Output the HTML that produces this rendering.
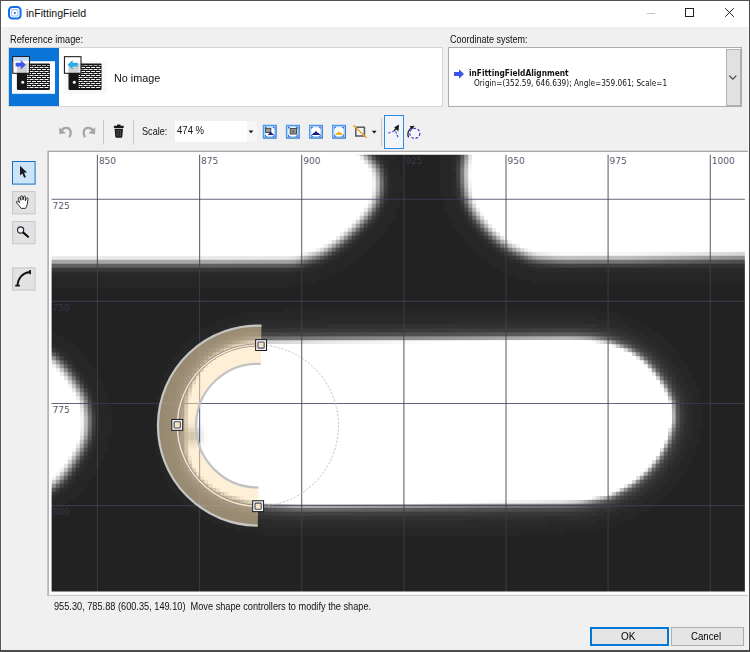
<!DOCTYPE html>
<html><head><meta charset="utf-8"><title>inFittingField</title>
<style>
html,body{margin:0;padding:0}
body{width:750px;height:652px;overflow:hidden;background:#f0f0f0;position:relative;font-family:"Liberation Sans",sans-serif;font-size:10px;color:#000}
.a{position:absolute}
.t{position:absolute;white-space:pre;transform-origin:0 0;line-height:12px}
.dv{font-family:"DejaVu Sans","Liberation Sans",sans-serif}
</style></head><body>
<!-- title bar -->
<div class="a" style="left:0;top:0;width:750px;height:27px;background:#fff"></div>
<svg class="a" style="left:7px;top:5px" width="16" height="16" viewBox="0 0 16 16">
<rect x="2" y="2" width="11.6" height="11.6" rx="3.4" fill="#fff" stroke="#0f6fe6" stroke-width="2"/>
<rect x="4.6" y="4.6" width="6.4" height="6.4" rx="1.2" fill="none" stroke="#9cc4f7" stroke-width="1.1"/>
<circle cx="7.8" cy="8" r="1" fill="#2a56b0"/>
</svg>
<div class="t" style="left:26px;top:7px;font-size:10.6px;color:#111">inFittingField</div>
<svg class="a" style="left:640px;top:0" width="110" height="27" viewBox="0 0 110 27">
<path d="M6.800 13.500h8.400" stroke="#c2c2c2" stroke-width="1" fill="none"/>
<rect x="45.5" y="8.5" width="8" height="8" fill="none" stroke="#222" stroke-width="1"/>
<path d="M85.2 8.2l8.6 8.6M93.8 8.2l-8.6 8.6" stroke="#222" stroke-width="1" fill="none"/>
</svg>

<!-- reference image -->
<div class="t" style="left:10.4px;top:34px;transform:scaleX(.925);color:#111">Reference image:</div>
<div class="a" style="left:8px;top:47px;width:435px;height:60px;background:#fff;border:1px solid #d4d4d4;box-sizing:border-box"></div>
<div class="a" style="left:9px;top:48px;width:50px;height:58px;background:#0a74d9"></div>
<div id="ri"><svg class="a" style="left:8px;top:48px" width="110" height="58" viewBox="8 48 110 58"><rect x="12" y="61.2" width="43" height="32.6" fill="#fdfdfd"/><rect x="63.6" y="61.2" width="43" height="32.6" fill="#f8f8f8"/><rect x="16.9" y="63.6" width="33" height="26.3" rx=".8" fill="#161616"/><path d="M27.0 65.5h4.0M32.0 65.5h4.0M37.0 65.5h4.0M42.0 65.5h4.0M47.0 65.5h2.6" stroke="#a8a8a8" stroke-width="1"/><path d="M29.5 67.5h4.0M34.5 67.5h4.0M39.5 67.5h4.0M44.5 67.5h4.0M27.0 67.5h1.5" stroke="#f2f2f2" stroke-width="1"/><path d="M27.0 69.5h4.0M32.0 69.5h4.0M37.0 69.5h4.0M42.0 69.5h4.0M47.0 69.5h2.6" stroke="#f2f2f2" stroke-width="1"/><path d="M29.5 71.5h4.0M34.5 71.5h4.0M39.5 71.5h4.0M44.5 71.5h4.0M27.0 71.5h1.5" stroke="#f2f2f2" stroke-width="1"/><path d="M27.0 73.5h4.0M32.0 73.5h4.0M37.0 73.5h4.0M42.0 73.5h4.0M47.0 73.5h2.6" stroke="#f2f2f2" stroke-width="1"/><path d="M29.5 75.5h4.0M34.5 75.5h4.0M39.5 75.5h4.0M44.5 75.5h4.0M27.0 75.5h1.5" stroke="#f2f2f2" stroke-width="1"/><path d="M27.0 77.5h4.0M32.0 77.5h4.0M37.0 77.5h4.0M42.0 77.5h4.0M47.0 77.5h2.6" stroke="#f2f2f2" stroke-width="1"/><path d="M29.5 79.5h4.0M34.5 79.5h4.0M39.5 79.5h4.0M44.5 79.5h4.0M27.0 79.5h1.5" stroke="#f2f2f2" stroke-width="1"/><path d="M27.0 81.5h4.0M32.0 81.5h4.0M37.0 81.5h4.0M42.0 81.5h4.0M47.0 81.5h2.6" stroke="#f2f2f2" stroke-width="1"/><path d="M29.5 83.5h4.0M34.5 83.5h4.0M39.5 83.5h4.0M44.5 83.5h4.0M27.0 83.5h1.5" stroke="#f2f2f2" stroke-width="1"/><path d="M27.0 85.5h4.0M32.0 85.5h4.0M37.0 85.5h4.0M42.0 85.5h4.0M47.0 85.5h2.6" stroke="#f2f2f2" stroke-width="1"/><path d="M29.5 87.5h4.0M34.5 87.5h4.0M39.5 87.5h4.0M44.5 87.5h4.0M27.0 87.5h1.5" stroke="#f2f2f2" stroke-width="1"/><circle cx="22.7" cy="82.3" r="1.5" fill="#f8f8f8"/><rect x="12.8" y="56.7" width="16.6" height="16.6" fill="rgba(255,255,255,.8)" stroke="#0a0a0a" stroke-width="1"/><rect x="13.3" y="57.2" width="15.6" height="3.2" fill="#c2daf2"/><path d="M15.6 62.8h5.2v-2.9l5 4.8-5 4.8v-2.9h-5.2z" fill="#3a58ea"/><rect x="68.5" y="63.6" width="33" height="26.3" rx=".8" fill="#161616"/><path d="M78.6 65.5h4.0M83.6 65.5h4.0M88.6 65.5h4.0M93.6 65.5h4.0M98.6 65.5h2.6" stroke="#a8a8a8" stroke-width="1"/><path d="M81.1 67.5h4.0M86.1 67.5h4.0M91.1 67.5h4.0M96.1 67.5h4.0M78.6 67.5h1.5" stroke="#f2f2f2" stroke-width="1"/><path d="M78.6 69.5h4.0M83.6 69.5h4.0M88.6 69.5h4.0M93.6 69.5h4.0M98.6 69.5h2.6" stroke="#f2f2f2" stroke-width="1"/><path d="M81.1 71.5h4.0M86.1 71.5h4.0M91.1 71.5h4.0M96.1 71.5h4.0M78.6 71.5h1.5" stroke="#f2f2f2" stroke-width="1"/><path d="M78.6 73.5h4.0M83.6 73.5h4.0M88.6 73.5h4.0M93.6 73.5h4.0M98.6 73.5h2.6" stroke="#f2f2f2" stroke-width="1"/><path d="M81.1 75.5h4.0M86.1 75.5h4.0M91.1 75.5h4.0M96.1 75.5h4.0M78.6 75.5h1.5" stroke="#f2f2f2" stroke-width="1"/><path d="M78.6 77.5h4.0M83.6 77.5h4.0M88.6 77.5h4.0M93.6 77.5h4.0M98.6 77.5h2.6" stroke="#f2f2f2" stroke-width="1"/><path d="M81.1 79.5h4.0M86.1 79.5h4.0M91.1 79.5h4.0M96.1 79.5h4.0M78.6 79.5h1.5" stroke="#f2f2f2" stroke-width="1"/><path d="M78.6 81.5h4.0M83.6 81.5h4.0M88.6 81.5h4.0M93.6 81.5h4.0M98.6 81.5h2.6" stroke="#f2f2f2" stroke-width="1"/><path d="M81.1 83.5h4.0M86.1 83.5h4.0M91.1 83.5h4.0M96.1 83.5h4.0M78.6 83.5h1.5" stroke="#f2f2f2" stroke-width="1"/><path d="M78.6 85.5h4.0M83.6 85.5h4.0M88.6 85.5h4.0M93.6 85.5h4.0M98.6 85.5h2.6" stroke="#f2f2f2" stroke-width="1"/><path d="M81.1 87.5h4.0M86.1 87.5h4.0M91.1 87.5h4.0M96.1 87.5h4.0M78.6 87.5h1.5" stroke="#f2f2f2" stroke-width="1"/><circle cx="74.3" cy="82.3" r="1.5" fill="#f8f8f8"/><rect x="64.4" y="56.7" width="16.6" height="16.6" fill="rgba(255,255,255,.8)" stroke="#0a0a0a" stroke-width="1"/><path d="M77.8 62.8h-5.2v-2.9l-5 4.8 5 4.8v-2.9h5.2z" fill="#2eaae8"/></svg></div><!--riend-->
<div class="t" style="left:113.500px;top:72px;font-size:10.600px;transform:scaleX(1.020);color:#111">No image</div>

<!-- coordinate system -->
<div class="t" style="left:449.6px;top:34px;transform:scaleX(.9);color:#111">Coordinate system:</div>
<div class="a" style="left:448px;top:47px;width:294px;height:60px;background:#fff;border:1px solid #acacac;box-sizing:border-box"></div>
<div class="a" style="left:726px;top:49px;width:14.500px;height:57px;background:#e1e1e1;border:1px solid #b2b2b2;box-sizing:border-box"></div>
<svg class="a" style="left:727px;top:72px" width="12" height="10" viewBox="0 0 12 10"><path d="M2.300 3.600l3.500 3.500 3.500-3.500" fill="none" stroke="#444" stroke-width="1.200"/></svg>
<svg class="a" style="left:453px;top:68px" width="12" height="12" viewBox="0 0 12 12"><path d="M1 4h5V1.2L11 6 6 10.8V8H1z" fill="#3a55e8"/></svg>
<div class="t dv" style="left:469px;top:67px;font-weight:bold;font-size:8.400px;transform:scaleX(.890);color:#111">inFittingFieldAlignment</div>
<div class="t dv" style="left:474px;top:77px;font-size:8.400px;transform:scaleX(.880);color:#111">Origin=(352.59, 646.639); Angle=359.061; Scale=1</div>

<!-- toolbar -->
<div id="tb">
<svg class="a" style="left:50px;top:112px" width="390" height="40" viewBox="50 112 390 40">
<!-- undo / redo (disabled) -->
<g id="un"><path d="M69.4 137.200c2.600-4.600 1.400-9.200-3-9.400-2.200-.1-3.800.8-4.800 2.600" fill="none" stroke="#a6a6a6" stroke-width="2.300"/>
<path d="M59.100 127.300l.3 6.900 6.500-.9z" fill="#a6a6a6"/></g>
<use href="#un" transform="matrix(-1 0 0 1 154.400 0)"/>
<!-- separators -->
<path d="M103.5 119.5v25M133.5 119.5v25M381.5 118.5v28" stroke="#c8c8c8" stroke-width="1"/>
<!-- trash -->
<g fill="#1a1a1a">
<rect x="117" y="124.6" width="3.6" height="1.6" rx=".6"/>
<rect x="113.8" y="125.8" width="10" height="2.3" rx=".8"/>
<path d="M114.6 128.8h8.4l-.7 8a1.1 1.1 0 0 1-1.1 1h-4.8a1.1 1.1 0 0 1-1.1-1z"/>
</g>
<path d="M117 130v6.4M118.8 130v6.4M120.6 130v6.4" stroke="#6a6a6a" stroke-width=".6"/>
<!-- combo -->
<rect x="175" y="121" width="82" height="21" fill="#fff"/>
<rect x="247" y="121" width="10" height="21" fill="#f6f6f6"/>
<path d="M248.6 130.6h4.8l-2.4 2.6z" fill="#111"/>
<!-- fit icons -->
<g id="fi1">
<rect x="263.500" y="125.500" width="12.400" height="12.400" fill="#fff" stroke="#4a9aec" stroke-width="1.500"/>
<rect x="264.700" y="126.700" width="10" height="10" fill="#fbfdff" stroke="#a9d3fb" stroke-width="1.100"/>
<path d="M263.400 138.200h12.800v-12.800" fill="none" stroke="#2c64a8" stroke-width=".9" opacity=".55"/>
<path d="M264.900 129v-2.300h2.300zM272.200 126.700h2.300v2.300zM274.500 134.400v2.300h-2.300zM267.200 136.700h-2.300v-2.300z" fill="#2f55e2"/>
</g>
<use href="#fi1" x="23.1"/><use href="#fi1" x="46.2"/><use href="#fi1" x="69.3"/>
<rect x="265.600" y="128.300" width="5.200" height="4.200" fill="#9a9a9a" stroke="#3a3a3a" stroke-width=".9"/>
<path d="M268 135h5.800l-1-1.500h-.8l-.6-1.200h-1.400l-.6 1.200h-.6z" fill="#141a8c"/>
<rect x="290.2" y="128.6" width="6.4" height="5.4" fill="#9a9a9a" stroke="#333" stroke-width=".9"/>
<rect x="292.2" y="130.4" width="2.2" height="1.8" fill="#555"/>
<path d="M311.8 135h8.4l-1.6-2h-1l-.8-1.6h-1.8l-.8 1.6h-.8z" fill="#141a8c"/>
<path d="M334.9 135h8.4l-1.6-2h-1l-.8-1.6h-1.8l-.8 1.6h-.8z" fill="#e8b820"/>
<!-- square with diagonal -->
<rect x="355.8" y="127.2" width="8.6" height="8.8" fill="#f4f4f4" stroke="#555a60" stroke-width="1.5"/>
<path d="M353.4 125.2l13.2 12.6" stroke="#f0a020" stroke-width="1.3"/>
<path d="M371.8 130.8h4.8l-2.4 2.6z" fill="#111"/>
<!-- selected tool -->
<rect x="384.500" y="115.500" width="19" height="33" fill="#f1f4f8" stroke="#2a8ae0" stroke-width="1"/>
<path d="M388.2 133.2l7-2.6" stroke="#5a4fe0" stroke-width="1.1" stroke-dasharray="2.6 1.4" fill="none"/>
<path d="M395.6 131.4l2.4 5.8" stroke="#4038d8" stroke-width="1.1" stroke-dasharray="2.4 1.4" fill="none"/>
<path d="M399 124.4l-.6 7.2-1.8-2-2.6 1.6-.4-1 2-2.2-1.6-.6z" fill="#141414"/>
<!-- rotate icon -->
<circle cx="414.8" cy="133.4" r="5" fill="#f8f8f8" stroke="#3a34d8" stroke-width="1.2" stroke-dasharray="2.6 1.7"/>
<path d="M408.6 137.4a7.4 7.4 0 0 1 3-9.6" fill="none" stroke="#222" stroke-width="1.3"/>
<path d="M409.6 126.2l5-.4-2.6 3.6z" fill="#141414"/>
</svg>
<div class="t" style="left:142px;top:125px;font-size:10.6px;transform:scaleX(.86);color:#111">Scale:</div>
<div class="t" style="left:177px;top:125px;font-size:10.400px;transform:scaleX(.920);color:#111">474 %</div>
</div><!--tbend-->

<!-- left tools -->
<div id="lt"><svg class="a" style="left:8px;top:156px" width="36" height="140" viewBox="8 156 36 140">
<rect x="12.5" y="161.5" width="22.6" height="22.6" fill="#cce4f7" stroke="#1a6fc4" stroke-width="1"/>
<rect x="12.6" y="191.6" width="22.4" height="22.2" fill="#e2e2e2" stroke="#c6c6c6" stroke-width="1"/>
<rect x="12.6" y="221.5" width="22.4" height="22.2" fill="#e2e2e2" stroke="#c6c6c6" stroke-width="1"/>
<rect x="12.6" y="267.9" width="22.4" height="22.2" fill="#e2e2e2" stroke="#c6c6c6" stroke-width="1"/>
<!-- cursor -->
<path d="M20 165.8v9.6l2.3-2 1.9 4.4 1.7-.8-1.9-4.2 3-.3z" fill="#1c1c1c"/>
<!-- hand -->
<path d="M21.2 208.4c-1.2-1.6-2.6-3.6-4.4-5.4-.9-1-.1-2.200 1.100-1.600l1.700 1.300-1.300-4.200c-.3-1.100 1.100-1.600 1.600-.6l1.100 2.400-.3-3.600c0-1.200 1.500-1.300 1.800-.2l.6 3.400.6-3.200c.3-1.100 1.700-.9 1.700.2l-.1 3.800 1.100-2.300c.5-1 1.800-.5 1.600.6-.4 2.200-.5 4-.9 5.800-.3 1.500-.9 2.500-1.600 3.600z" fill="#fff" stroke="#1a1a1a" stroke-width=".9" stroke-linejoin="round"/>
<!-- magnifier -->
<circle cx="20.6" cy="230" r="3.1" fill="#e9f1fb" stroke="#222" stroke-width="1.1"/>
<path d="M23.3 232.600l4.800 4.100" stroke="#111" stroke-width="2.100" stroke-linecap="round"/>
<!-- arc -->
<path d="M17.4 285.600c.8-7.400 5.200-12.600 12.600-13.600" fill="none" stroke="#111" stroke-width="1.800"/>
<path d="M15.300 285.700h4.500M30.100 269.900v4.400" stroke="#111" stroke-width="1.700"/>
</svg></div><!--ltend-->

<!-- canvas -->

<div id="cv"><svg class="a" style="left:0;top:0" width="750" height="652" viewBox="0 0 750 652">
<defs><clipPath id="ic"><rect x="51" y="154" width="695" height="439"/></clipPath><filter id="bl" filterUnits="userSpaceOnUse" x="-60" y="40" width="870" height="670"><feGaussianBlur in="SourceGraphic" stdDeviation="5" result="a"/><feGaussianBlur in="SourceGraphic" stdDeviation="18" result="c"/><feComposite in="a" in2="c" operator="arithmetic" k2="1" k3=".14"/></filter><filter id="bs" filterUnits="userSpaceOnUse" x="-60" y="40" width="870" height="670"><feGaussianBlur in="SourceGraphic" stdDeviation="2.6" result="a"/><feGaussianBlur in="SourceGraphic" stdDeviation="6" result="b"/><feGaussianBlur in="SourceGraphic" stdDeviation="18" result="c"/><feComposite in="a" in2="b" operator="arithmetic" k2=".55" k3=".6" result="ab"/><feComposite in="ab" in2="c" operator="arithmetic" k2="1" k3=".3"/></filter><filter id="px" filterUnits="userSpaceOnUse" x="48" y="152" width="704" height="448"><feFlood x="49" y="153" width="2" height="2"/><feComposite width="4" height="4"/><feTile result="t"/><feComposite in="SourceGraphic" in2="t" operator="in"/><feMorphology operator="dilate" radius="1"/></filter></defs>
<g clip-path="url(#ic)">
<g filter="url(#px)">
<rect x="0" y="100" width="750" height="552" fill="#222"/>
<g fill="#fcfcfc" filter="url(#bl)"><path d="M-100.0 60.0L335.0 60.0L345.0 120.0L352.0 140.0L364.7 155.0L377.7 170.0L379.7 186.0L376.7 200.0L368.7 213.8L353.7 229.8L339.8 241.7L321.8 253.7L295.0 261.7L200.0 262.0L51.0 262.0L-100.0 262.0Z"/><path d="M470.0 60.0L468.0 140.0L466.9 156.0L463.9 170.0L464.9 186.0L467.9 200.0L474.9 213.8L487.9 229.8L500.8 241.7L513.8 249.7L533.7 257.7L560.0 259.5L630.0 259.3L745.0 256.5L850.0 255.0L850.0 60.0Z"/><path d="M-50.0 340.0L51.0 356.0L65.7 371.4L75.4 385.2L83.7 399.0L87.8 418.3L86.4 434.9L80.9 448.7L72.6 462.5L63.0 476.3L51.0 487.4L-50.0 500.0Z"/></g>
<g fill="#fcfcfc" filter="url(#bs)"><path d="M261.4 341.9L245.1 343.5L228.9 348.4L212.8 358.1L204.9 366.0L196.7 377.4L190.3 390.2L187.1 403.0L186.5 420.0L187.0 449.6L190.3 464.3L196.4 473.6L204.5 481.6L212.5 488.0L228.7 496.1L245.2 500.2L258.4 503.5L300.1 506.0L400.0 505.0L500.0 503.5L563.9 502.8L581.1 501.7L608.3 496.6L618.3 491.4L633.2 483.0L647.7 470.5L658.1 458.0L667.4 441.6L673.5 421.1L672.5 404.3L664.4 387.0L653.9 372.3L643.6 360.9L629.2 350.7L608.5 342.4L589.7 339.5L570.7 338.8L450.0 340.0L330.0 341.0Z"/></g>
<ellipse cx="192" cy="436" rx="6" ry="8" fill="#222" opacity=".6" filter="url(#bl)"/>
</g>
<g stroke="rgba(62,62,86,.8)" stroke-width="1.1">
<path d="M97.4 153V594"/>
<path d="M199.6 153V594"/>
<path d="M301.7 153V594"/>
<path d="M403.9 153V594"/>
<path d="M506.0 153V594"/>
<path d="M608.1 153V594"/>
<path d="M710.3 153V594"/>
<path d="M50 199.3H747"/>
<path d="M50 301.4H747"/>
<path d="M50 403.5H747"/>
<path d="M50 505.6H747"/>
</g>
<g font-family="DejaVu Sans,Liberation Sans,sans-serif" font-size="9" fill="rgba(58,58,80,.88)">
<text x="98.9" y="164.1">850</text>
<text x="201.1" y="164.1">875</text>
<text x="303.2" y="164.1">900</text>
<text x="405.4" y="164.1">925</text>
<text x="507.5" y="164.1">950</text>
<text x="609.6" y="164.1">975</text>
<text x="711.8" y="164.1">1000</text>
<text x="52.6" y="209.0">725</text>
<text x="52.6" y="311.1">750</text>
<text x="52.6" y="413.2">775</text>
<text x="52.6" y="515.3">800</text>
</g>
<path d="M261.44 325.66A100.0 100.0 0 1 0 257.76 525.60L258.46 487.40A61.8 61.8 0 1 1 260.74 363.87Z" fill="rgba(254,224,178,.525)"/>
<path d="M261.44 325.66A100.0 100.0 0 1 0 257.76 525.60" fill="none" stroke="#c6c6c6" stroke-width="2.2"/>
<path d="M258.46 487.40A61.8 61.8 0 1 1 260.74 363.87" fill="none" stroke="#c2c2c2" stroke-width="2.2"/>
<circle cx="257.85" cy="425.6" r="80.6" fill="none" stroke="#b4b4b4" stroke-width=".8" stroke-dasharray="2.2 1.6"/>
<path d="M261.08 345.06A80.6 80.6 0 1 0 258.12 506.20" fill="none" stroke="#8c8c90" stroke-width="3"/>
<path d="M261.08 345.06A80.6 80.6 0 1 0 258.12 506.20" fill="none" stroke="#fbe3c2" stroke-width="1.5"/>
<rect x="255.63" y="339.61" width="10.9" height="10.9" fill="#eef3f9" stroke="#1c1c1c" stroke-width="1"/>
<rect x="257.98" y="341.96" width="6.2" height="6.2" rx=".8" fill="rgba(250,215,160,.55)" stroke="#4c4c4c" stroke-width="1.1"/>
<rect x="171.80" y="419.45" width="10.9" height="10.9" fill="#eef3f9" stroke="#1c1c1c" stroke-width="1"/>
<rect x="174.15" y="421.80" width="6.2" height="6.2" rx=".8" fill="rgba(250,215,160,.55)" stroke="#4c4c4c" stroke-width="1.1"/>
<rect x="252.67" y="500.75" width="10.9" height="10.9" fill="#eef3f9" stroke="#1c1c1c" stroke-width="1"/>
<rect x="255.02" y="503.10" width="6.2" height="6.2" rx=".8" fill="rgba(250,215,160,.55)" stroke="#4c4c4c" stroke-width="1.1"/>
</g>
<path d="M47.6 150.8H750V154.7H51.6V591.5H744.85V154.7H750V595H47.6Z" fill="#fdfdfd"/>
<path d="M48.1 596V151.3H750" fill="none" stroke="#8c8c8c" stroke-width="1.1"/>
<path d="M47.6 595.4H750" stroke="#c4c4c4" stroke-width="1"/>
</svg></div><!--cvend-->

<!-- status -->
<div class="t" style="left:54px;top:601px;transform:scaleX(.92);color:#111">955.30, 785.88 (600.35, 149.10)  Move shape controllers to modify the shape.</div>

<!-- buttons -->
<div class="a" style="left:590px;top:627px;width:79px;height:19px;box-sizing:border-box;border:2px solid #0078d7;background:#e5e5e5"></div>
<div class="t" style="left:621px;top:630px;font-size:10.5px;transform:scaleX(.95)">OK</div>
<div class="a" style="left:671px;top:627px;width:73px;height:19px;box-sizing:border-box;border:1px solid #adadad;background:#e5e5e5"></div>
<div class="t" style="left:691px;top:630px;font-size:10.5px;transform:scaleX(.92)">Cancel</div>

<!-- window borders -->
<div class="a" style="left:1px;top:27px;width:1px;height:623px;background:#fafafa"></div>
<div class="a" style="left:747.800px;top:27px;width:1px;height:623px;background:#fafafa"></div>
<div class="a" style="left:0;top:649.500px;width:750px;height:1px;background:#fafafa"></div>
<div class="a" style="left:0;top:0;width:750px;height:1px;background:#505050"></div>
<div class="a" style="left:0;top:0;width:1px;height:652px;background:#555"></div>
<div class="a" style="left:748.600px;top:0;width:1.400px;height:652px;background:#484848"></div>
<div class="a" style="left:0;top:650.400px;width:750px;height:1.600px;background:#4c4c4c"></div>
</body></html>
